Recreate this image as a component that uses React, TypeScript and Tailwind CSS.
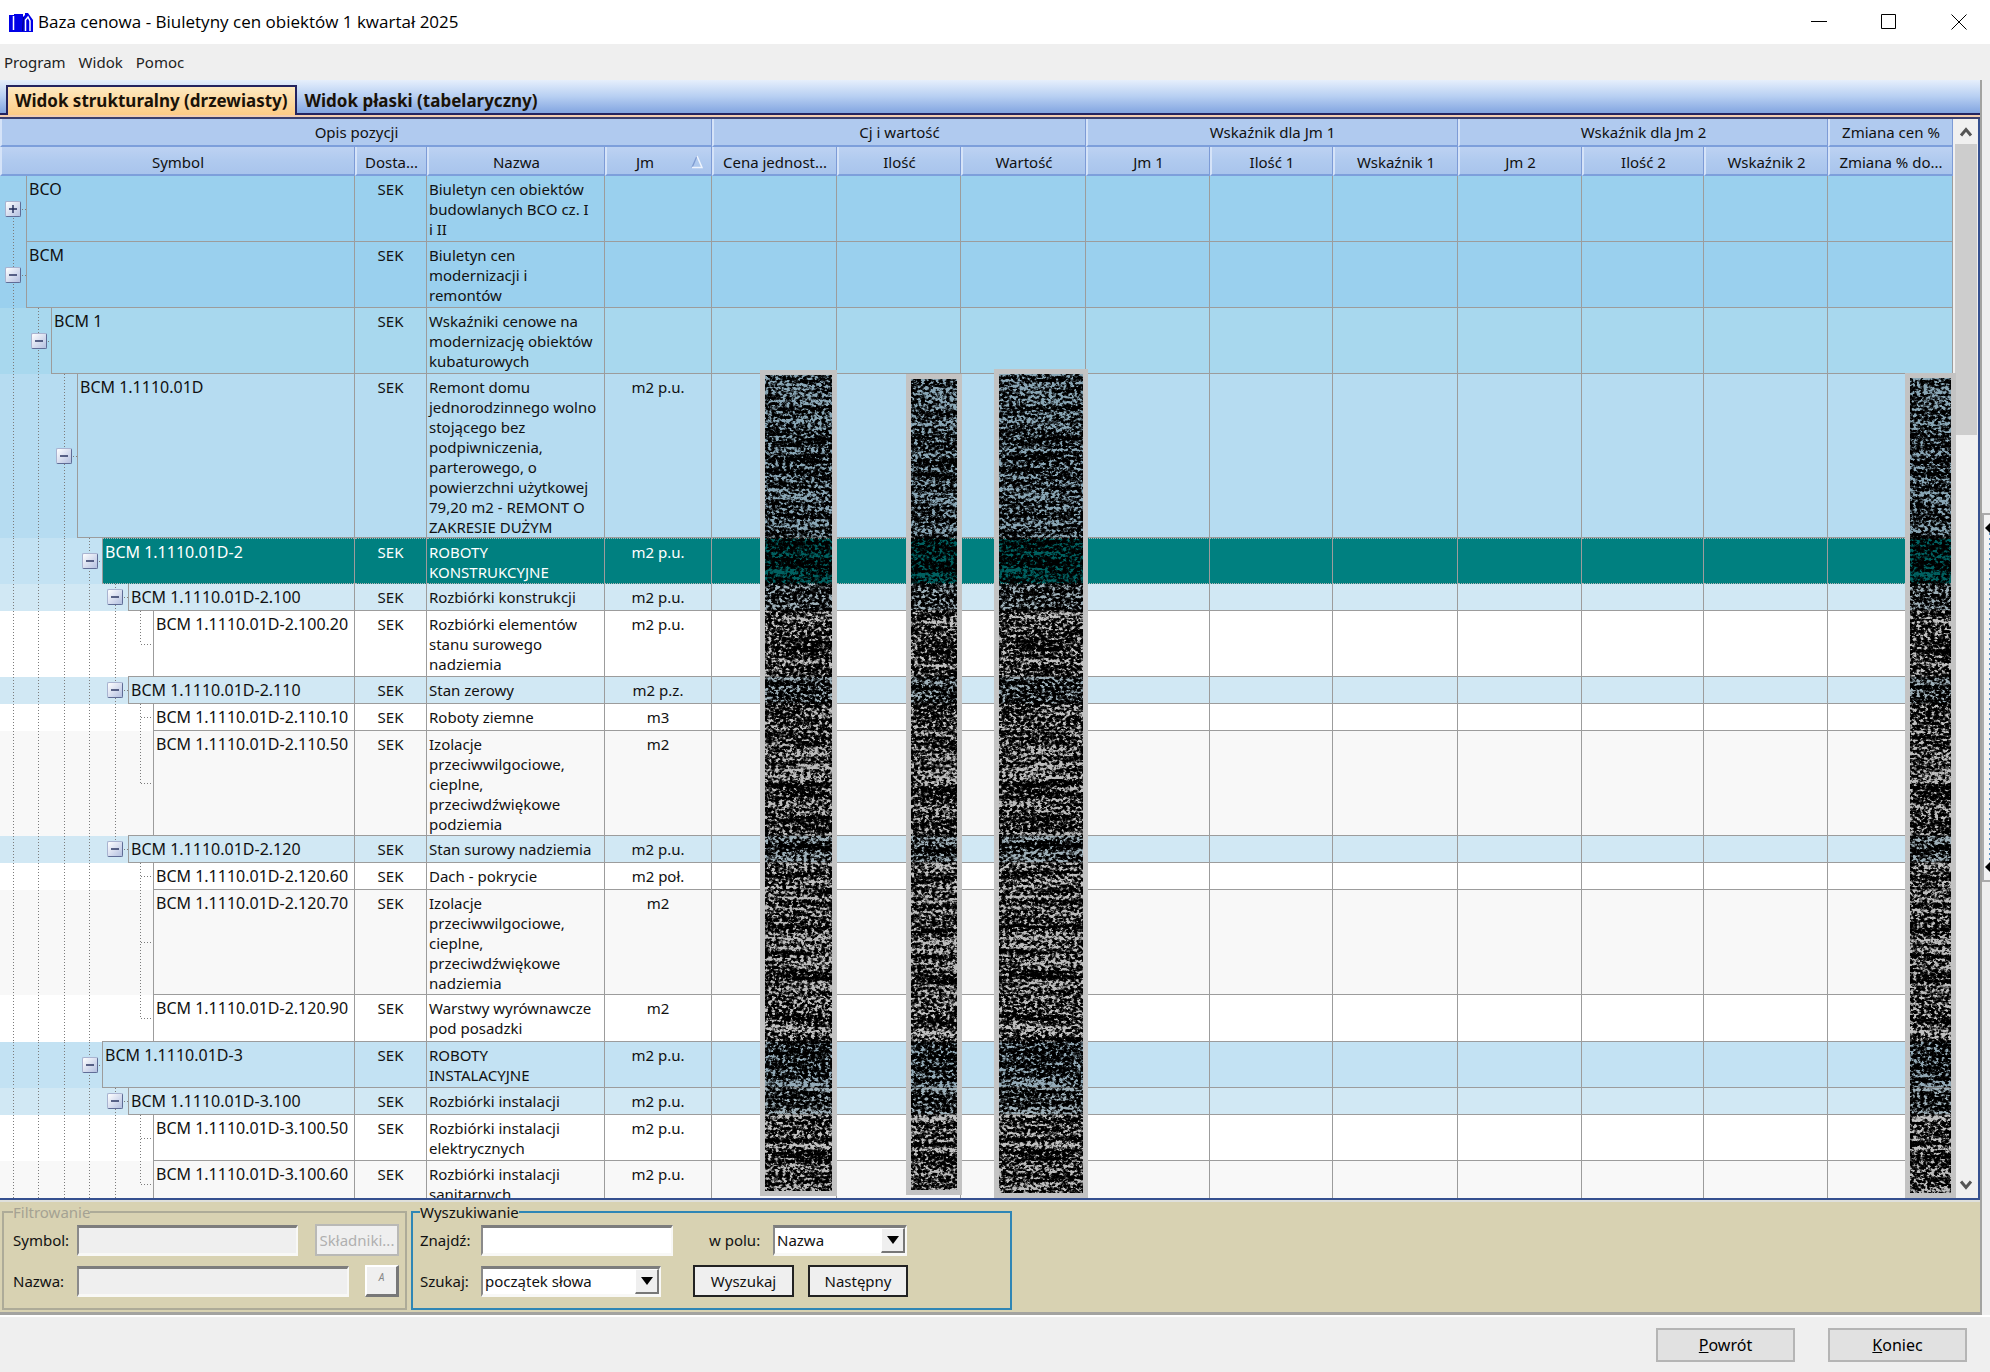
import React from "react";

type Row = {
  symbol: string;
  name: string;
  jm: string;
  level: number;
  height: string;
  bg: string;
  closed?: boolean;
  selected?: boolean;
  // levels whose guide line runs through the whole row
  guides: number[];
};

const rows: Row[] = [
  { symbol: "BCO", name: "Biuletyn cen obiektów\nbudowlanych BCO cz. I\ni II", jm: "", level: 0, height: "h-[66px]", bg: "bg-[#9ad0ee]", closed: true, guides: [] },
  { symbol: "BCM", name: "Biuletyn cen\nmodernizacji i\nremontów", jm: "", level: 0, height: "h-[66px]", bg: "bg-[#9ad0ee]", guides: [0] },
  { symbol: "BCM 1", name: "Wskaźniki cenowe na\nmodernizację obiektów\nkubaturowych", jm: "", level: 1, height: "h-[66px]", bg: "bg-[#a8d8ee]", guides: [0, 1] },
  { symbol: "BCM 1.1110.01D", name: "Remont domu\njednorodzinnego wolno\nstojącego bez\npodpiwniczenia,\nparterowego, o\npowierzchni użytkowej\n79,20 m2 - REMONT O\nZAKRESIE DUŻYM", jm: "m2 p.u.", level: 2, height: "h-[164px]", bg: "bg-[#b6dcf1]", guides: [0, 1, 2] },
  { symbol: "BCM 1.1110.01D-2", name: "ROBOTY\nKONSTRUKCYJNE", jm: "m2 p.u.", level: 3, height: "h-[46px]", bg: "bg-[#c3e2f3]", selected: true, guides: [0, 1, 2, 3] },
  { symbol: "BCM 1.1110.01D-2.100", name: "Rozbiórki konstrukcji", jm: "m2 p.u.", level: 4, height: "h-[27px]", bg: "bg-[#d1e8f4]", guides: [0, 1, 2, 3, 4] },
  { symbol: "BCM 1.1110.01D-2.100.20", name: "Rozbiórki elementów\nstanu surowego\nnadziemia", jm: "m2 p.u.", level: 5, height: "h-[66px]", bg: "bg-white", guides: [0, 1, 2, 3, 4] },
  { symbol: "BCM 1.1110.01D-2.110", name: "Stan zerowy", jm: "m2 p.z.", level: 4, height: "h-[27px]", bg: "bg-[#d1e8f4]", guides: [0, 1, 2, 3, 4] },
  { symbol: "BCM 1.1110.01D-2.110.10", name: "Roboty ziemne", jm: "m3", level: 5, height: "h-[27px]", bg: "bg-white", guides: [0, 1, 2, 3, 4, 5] },
  { symbol: "BCM 1.1110.01D-2.110.50", name: "Izolacje\nprzeciwwilgociowe,\ncieplne,\nprzeciwdźwiękowe\npodziemia", jm: "m2", level: 5, height: "h-[105px]", bg: "bg-[#f8f8f8]", guides: [0, 1, 2, 3, 4] },
  { symbol: "BCM 1.1110.01D-2.120", name: "Stan surowy nadziemia", jm: "m2 p.u.", level: 4, height: "h-[27px]", bg: "bg-[#d1e8f4]", guides: [0, 1, 2, 3] },
  { symbol: "BCM 1.1110.01D-2.120.60", name: "Dach - pokrycie", jm: "m2 poł.", level: 5, height: "h-[27px]", bg: "bg-white", guides: [0, 1, 2, 3, 5] },
  { symbol: "BCM 1.1110.01D-2.120.70", name: "Izolacje\nprzeciwwilgociowe,\ncieplne,\nprzeciwdźwiękowe\nnadziemia", jm: "m2", level: 5, height: "h-[105px]", bg: "bg-[#f8f8f8]", guides: [0, 1, 2, 3, 5] },
  { symbol: "BCM 1.1110.01D-2.120.90", name: "Warstwy wyrównawcze\npod posadzki", jm: "m2", level: 5, height: "h-[47px]", bg: "bg-white", guides: [0, 1, 2, 3] },
  { symbol: "BCM 1.1110.01D-3", name: "ROBOTY\nINSTALACYJNE", jm: "m2 p.u.", level: 3, height: "h-[46px]", bg: "bg-[#c3e2f3]", guides: [0, 1, 2, 3] },
  { symbol: "BCM 1.1110.01D-3.100", name: "Rozbiórki instalacji", jm: "m2 p.u.", level: 4, height: "h-[27px]", bg: "bg-[#d1e8f4]", guides: [0, 1, 2, 3, 4] },
  { symbol: "BCM 1.1110.01D-3.100.50", name: "Rozbiórki instalacji\nelektrycznych", jm: "m2 p.u.", level: 5, height: "h-[46px]", bg: "bg-white", guides: [0, 1, 2, 3, 4, 5] },
  { symbol: "BCM 1.1110.01D-3.100.60", name: "Rozbiórki instalacji\nsanitarnych", jm: "m2 p.u.", level: 5, height: "h-[46px]", bg: "bg-[#f8f8f8]", guides: [0, 1, 2, 3, 4] },
];

const columns = [
  { label: "Symbol", width: "w-[355px]" },
  { label: "Dosta...", width: "w-[72px]" },
  { label: "Nazwa", width: "w-[178px]" },
  { label: "Jm", width: "w-[107px]" },
  { label: "Cena jednost...", width: "w-[125px]" },
  { label: "Ilość", width: "w-[124px]" },
  { label: "Wartość", width: "w-[125px]" },
  { label: "Jm 1", width: "w-[124px]" },
  { label: "Ilość 1", width: "w-[123px]" },
  { label: "Wskaźnik 1", width: "w-[125px]" },
  { label: "Jm 2", width: "w-[124px]" },
  { label: "Ilość 2", width: "w-[122px]" },
  { label: "Wskaźnik 2", width: "w-[124px]" },
  { label: "Zmiana % do...", width: "w-[125px]" },
];

const groups = [
  { label: "Opis pozycji", span: 4 },
  { label: "Cj i wartość", span: 3 },
  { label: "Wskaźnik dla Jm 1", span: 3 },
  { label: "Wskaźnik dla Jm 2", span: 3 },
  { label: "Zmiana cen %", span: 1 },
];

// strips that hide the price columns
const masks = [
  "left-[760px] w-[77px] top-[251px] h-[826px]",
  "left-[906px] w-[56px] top-[255px] h-[821px]",
  "left-[994px] w-[94px] top-[250px] h-[829px]",
  "left-[1905px] w-[51px] top-[254px] h-[825px]",
];

const vDots = "bg-[repeating-linear-gradient(to_bottom,#7c7c7c_0_1px,transparent_1px_3px)]";
const hDots = "bg-[repeating-linear-gradient(to_right,#7c7c7c_0_1px,transparent_1px_3px)]";
const sunken = "border-t-[3px] border-l-2 border-b-[3px] border-r-2 border-t-[#7d7d7d] border-l-[#8a8a8a] border-b-[#f8f8f6] border-r-[#f8f8f6]";

const Guides = ({ row, nextLevel }: { row: Row; nextLevel: number }) => (
  <div className="flex h-full">
    {Array.from({ length: row.level + 1 }, (_, i) => {
      const own = i === row.level;
      const leaf = row.level === 5;
      let line = "";
      if (row.guides.includes(i)) line = "h-full";
      else if (own) line = row.closed ? "h-1/2 mt-auto" : "h-1/2";
      return (
        <div
          key={i}
          className={`relative flex h-full justify-center border-b ${i % 2 ? "w-[25px]" : "w-[26px]"} ${i > nextLevel ? "border-[#9c9c9c]" : "border-transparent"}`}
        >
          {line && <span className={`w-px ${line} ${vDots}`} />}
          {own && <span className={`absolute right-0 top-1/2 h-px w-1/2 ${hDots}`} />}
          {own && !leaf && (
            <button
              aria-label={row.closed ? "Rozwiń" : "Zwiń"}
              className="absolute top-1/2 left-1/2 flex h-4 w-4 -translate-x-1/2 -translate-y-1/2 items-center justify-center rounded-[2px] border border-[#5f6c96] border-t-[#a9b3d0] border-l-[#a9b3d0] bg-linear-to-br from-white to-[#b4c0e0]"
            >
              <svg width="10" height="10" viewBox="0 0 10 10" stroke="#1f2a58" strokeWidth="1.4">
                <path d={row.closed ? "M1 5h8M5 1v8" : "M1 5h8"} />
              </svg>
            </button>
          )}
        </div>
      );
    })}
  </div>
);

const TreeTable = () => (
  <table className="w-full table-fixed border-separate border-spacing-0 text-[15px] leading-[20px] text-[#111]">
    <colgroup>
      {columns.map((c) => (
        <col key={c.label} className={c.width} />
      ))}
    </colgroup>
    <thead>
      <tr className="h-7">
        {groups.map((g) => (
          <th key={g.label} colSpan={g.span} className="border-r border-b-2 border-l-2 border-r-[#7d9bd6] border-b-[#7d9fdb] border-l-[#d5e3f8] bg-[#b0caef] p-0 font-normal">
            {g.label}
          </th>
        ))}
      </tr>
      <tr className="h-[29px]">
        {columns.map((c) => (
          <th key={c.label} className="border-r border-b-2 border-l-2 border-r-[#7d9bd6] border-b-[#7d9fdb] border-l-[#d5e3f8] bg-linear-to-b from-[#bdd2f2] via-[#b0caef] to-[#a9c4ec] px-0 pt-[2px] pb-0 font-normal whitespace-nowrap">
            {c.label === "Jm" ? (
              <span className="flex items-center justify-between pr-2">
                <span className="grow pr-2">Jm</span>
                <svg width="12" height="14" viewBox="0 0 12 14" fill="none">
                  <path d="M1 12.5L6 1" stroke="#7f9bd0" strokeWidth="1.3" />
                  <path d="M6 1l5 11.5H1" stroke="#eef4fd" strokeWidth="1.5" />
                </svg>
              </span>
            ) : (
              c.label
            )}
          </th>
        ))}
      </tr>
    </thead>
    <tbody>
      {rows.map((row, n) => {
        const nextLevel = n + 1 < rows.length ? rows[n + 1].level : 5;
        const fill = row.selected
          ? "bg-[#008080] text-white border-t border-t-[#b5b5b5] border-b-[#b5b5b5] [border-block-style:dotted]"
          : row.bg;
        const cell = `border-b border-r border-[#9c9c9c] px-[2px] pt-[3px] pb-0 align-top ${fill}`;
        return (
          <tr key={row.symbol} className={row.height}>
            <td className={`h-px border-r border-[#9c9c9c] p-0 ${row.bg}`}>
              <div className="flex h-full">
                <Guides row={row} nextLevel={nextLevel} />
                <div className={`h-full grow border-b border-l border-[#9c9c9c] pt-[3px] pl-[2px] text-[16px] whitespace-nowrap ${fill}`}>
                  {row.symbol}
                </div>
              </div>
            </td>
            <td className={`${cell} text-center`}>SEK</td>
            <td className={`${cell} whitespace-pre`}>{row.name}</td>
            <td className={`${cell} text-center`}>{row.jm}</td>
            {columns.slice(4).map((c) => (
              <td key={c.label} className={cell} />
            ))}
          </tr>
        );
      })}
    </tbody>
  </table>
);

const Mask = ({ place, seed }: { place: string; seed: number }) => (
  <div className={`absolute overflow-hidden border-[5px] border-[#c3c3c3] ${place}`}>
    <svg className="h-full w-full">
      <filter id={`grain${seed}`} x="0" y="0" width="100%" height="100%">
        <feTurbulence type="fractalNoise" baseFrequency="0.28 0.36" numOctaves="3" seed={seed} result="fine" />
        <feTurbulence type="fractalNoise" baseFrequency="0.012 0.16" numOctaves="2" seed="7" result="bands" />
        <feComposite in="fine" in2="bands" operator="arithmetic" k2="0.65" k3="0.35" />
        <feColorMatrix values="0 0 0 0 0  0 0 0 0 0  0 0 0 0 0  -6 0 0 0 3.65" />
        <feComponentTransfer>
          <feFuncA type="table" tableValues="0.25 0.5 0.75 0.92 1" />
        </feComponentTransfer>
      </filter>
      <rect width="100%" height="100%" filter={`url(#grain${seed})`} />
    </svg>
  </div>
);

const ScrollBar = () => (
  <div className="flex w-[25px] shrink-0 flex-col items-center bg-[#f0f0f0]">
    <button aria-label="W górę" className="flex h-[25px] w-full items-center justify-center">
      <svg width="14" height="12" viewBox="0 0 14 12" fill="none" stroke="#555" strokeWidth="3">
        <path d="M2 9.5l5-6 5 6" />
      </svg>
    </button>
    <div className="h-[291px] w-[22px] bg-[#cdcdcd]" />
    <button aria-label="W dół" className="mt-auto flex h-[27px] w-full items-center justify-center">
      <svg width="14" height="12" viewBox="0 0 14 12" fill="none" stroke="#555" strokeWidth="3">
        <path d="M2 2.500l5 6 5-6" />
      </svg>
    </button>
  </div>
);

const Select = ({ id, width, value }: { id: string; width: string; value: string }) => (
  <div className={`relative h-[31px] ${width}`}>
    <select id={id} className={`h-full w-full appearance-none bg-white pl-[2px] outline-none ${sunken}`}>
      <option>{value}</option>
    </select>
    <span className="pointer-events-none absolute top-[3px] right-[2px] bottom-[3px] flex w-6 items-center justify-center border-t border-r-2 border-b-2 border-l border-t-white border-r-[#777] border-b-[#777] border-l-white bg-[#efefef]">
      <svg width="12" height="8" viewBox="0 0 12 8">
        <path d="M0 0h12L6 8z" />
      </svg>
    </span>
  </div>
);

const SearchPanel = () => (
  <div className="flex h-[115px] shrink-0 gap-1 border-t-2 border-b-[3px] border-t-[#dfe0dc] border-b-[#a3a3a0] bg-[#d8d2b2] pl-[2px] text-[15px] leading-[20px] text-[#111]">
    <fieldset disabled className="h-[108px] w-[405px] border-2 border-[#adab98] pr-[6px] pl-[9px]">
      <legend className="h-5 text-[#a5a293]">Filtrowanie</legend>
      <div className="mt-[2px] flex items-center">
        <label htmlFor="symbol" className="w-16">Symbol:</label>
        <input id="symbol" className={`h-[31px] w-[221px] bg-[#efefef] px-1 ${sunken}`} />
        <button className="ml-auto h-8 w-[84px] border-2 border-[#b9b9b6] bg-[#efefef] text-[#b0b0b0]">Składniki...</button>
      </div>
      <div className="mt-[9px] flex items-center">
        <label htmlFor="nazwa" className="w-16">Nazwa:</label>
        <input id="nazwa" className={`h-[31px] w-[272px] bg-[#efefef] px-1 ${sunken}`} />
        <button className="ml-auto flex h-8 w-[34px] justify-center border-t-2 border-r-[3px] border-b-[3px] border-l-2 border-t-white border-r-[#777] border-b-[#777] border-l-white bg-[#efefef] text-[10px] text-[#888] italic">A</button>
      </div>
    </fieldset>
    <fieldset className="h-[108px] w-[601px] border-2 border-[#2f86b5] px-[7px]">
      <legend className="h-5">Wyszukiwanie</legend>
      <div className="mt-[2px] flex h-8 items-center">
        <label htmlFor="find" className="w-[61px]">Znajdź:</label>
        <input id="find" className={`h-[31px] w-[192px] bg-white px-1 ${sunken}`} />
        <label htmlFor="field" className="ml-9 w-16">w polu:</label>
        <Select id="field" width="w-[134px]" value="Nazwa" />
      </div>
      <div className="mt-[9px] flex items-center">
        <label htmlFor="mode" className="w-[61px]">Szukaj:</label>
        <Select id="mode" width="w-[180px]" value="początek słowa" />
        <button className="ml-8 h-8 w-[101px] border-2 border-[#222] bg-[#efefef]">Wyszukaj</button>
        <button className="ml-[14px] h-8 w-[100px] border-2 border-[#222] bg-[#efefef]">Następny</button>
      </div>
    </fieldset>
  </div>
);

const Splitter = () => (
  <div className="mt-[433px] flex h-[369px] w-2 shrink-0 flex-col items-end justify-between border-t-2 border-b-2 border-l-2 border-[#ababab] bg-[#f4f4f4] py-2">
    <svg width="5" height="10" viewBox="0 0 5 10"><path d="M5 0v10L0 5z" /></svg>
    <div className="w-px grow bg-[repeating-linear-gradient(to_bottom,#5b93c9_0_2px,transparent_2px_5px)]" />
    <svg width="5" height="10" viewBox="0 0 5 10"><path d="M5 0v10L0 5z" /></svg>
  </div>
);

const App = () => (
  <div className="flex h-screen flex-col overflow-hidden bg-[#efefef] font-['Noto_Sans',sans-serif] text-black">
    <header className="flex h-11 shrink-0 items-center bg-white pl-[9px]">
      <svg width="24" height="19" viewBox="0 0 24 19">
        <path d="M0 2h5V1h9v3l2-2V0h3l5 7v12H0z" fill="#0000e6" />
        <path d="M4.500 3v14M16.500 18V7l2.500-3 2 4v10" fill="none" stroke="#fff" strokeWidth="1.5" />
        <path d="M14.500 4l-1 14" stroke="#00007a" strokeWidth="1" />
      </svg>
      <h1 className="ml-[5px] font-['Open_Sans',sans-serif] text-[17px] leading-6">Baza cenowa - Biuletyny cen obiektów 1 kwartał 2025</h1>
      <div className="ml-auto flex h-full items-center">
        <button aria-label="Minimalizuj" className="flex h-full w-[70px] items-center justify-center">
          <svg width="16" height="16" stroke="#000"><path d="M0 7.500h16" /></svg>
        </button>
        <button aria-label="Maksymalizuj" className="flex h-full w-[70px] items-center justify-center">
          <svg width="16" height="16" fill="none" stroke="#000"><path d="M.5.5h14v14H.5z" /></svg>
        </button>
        <button aria-label="Zamknij" className="ml-1 flex h-full w-[62px] items-center justify-center">
          <svg width="16" height="16" stroke="#000"><path d="M.5.5l15 15M15.500.5l-15 15" /></svg>
        </button>
      </div>
    </header>
    <nav className="flex h-9 shrink-0 items-center gap-[13px] pl-1 text-[15px] text-[#222]">
      <button>Program</button>
      <button>Widok</button>
      <button>Pomoc</button>
    </nav>

    <div className="flex min-h-0 grow">
      <main className="flex min-w-0 grow flex-col border-r-2 border-[#a3a3a0]">
        <div className="flex h-[35px] shrink-0 items-end border-b-2 border-[#23235f] bg-linear-to-b from-[#e6effc] via-[#b7cff2] to-[#83a5e0] pl-[6px] text-[17px] font-bold text-[#1a1208]">
          <button className="relative -mb-[2px] h-[30px] border-2 border-b-0 border-[#23235f] bg-linear-to-b from-[#fde9c0] to-[#fdcb85] px-[7px]">Widok strukturalny (drzewiasty)</button>
          <button className="h-[25px] px-2">Widok płaski (tabelaryczny)</button>
        </div>
        <div className="h-1 shrink-0 border-b-2 border-[#3b3f6e] bg-[#f3cdb0]" />
        <div className="relative flex min-h-0 grow overflow-hidden border-r-2 border-b-2 border-[#35508f]">
          <div className="min-w-0 grow overflow-hidden">
            <TreeTable />
          </div>
          <ScrollBar />
          {masks.map((place, i) => (
            <Mask key={place} place={place} seed={i + 3} />
          ))}
        </div>
        <SearchPanel />
      </main>
      <Splitter />
    </div>

    <footer className="flex h-[57px] shrink-0 items-center justify-end gap-[33px] border-t-2 border-white pr-[23px] text-[16px]">
      <button className="h-[34px] w-[139px] border-2 border-[#b5b5b5] bg-[#e1e1e1]"><u>P</u>owrót</button>
      <button className="h-[34px] w-[139px] border-2 border-[#b5b5b5] bg-[#e1e1e1]"><u>K</u>oniec</button>
    </footer>
  </div>
);

export default App;
